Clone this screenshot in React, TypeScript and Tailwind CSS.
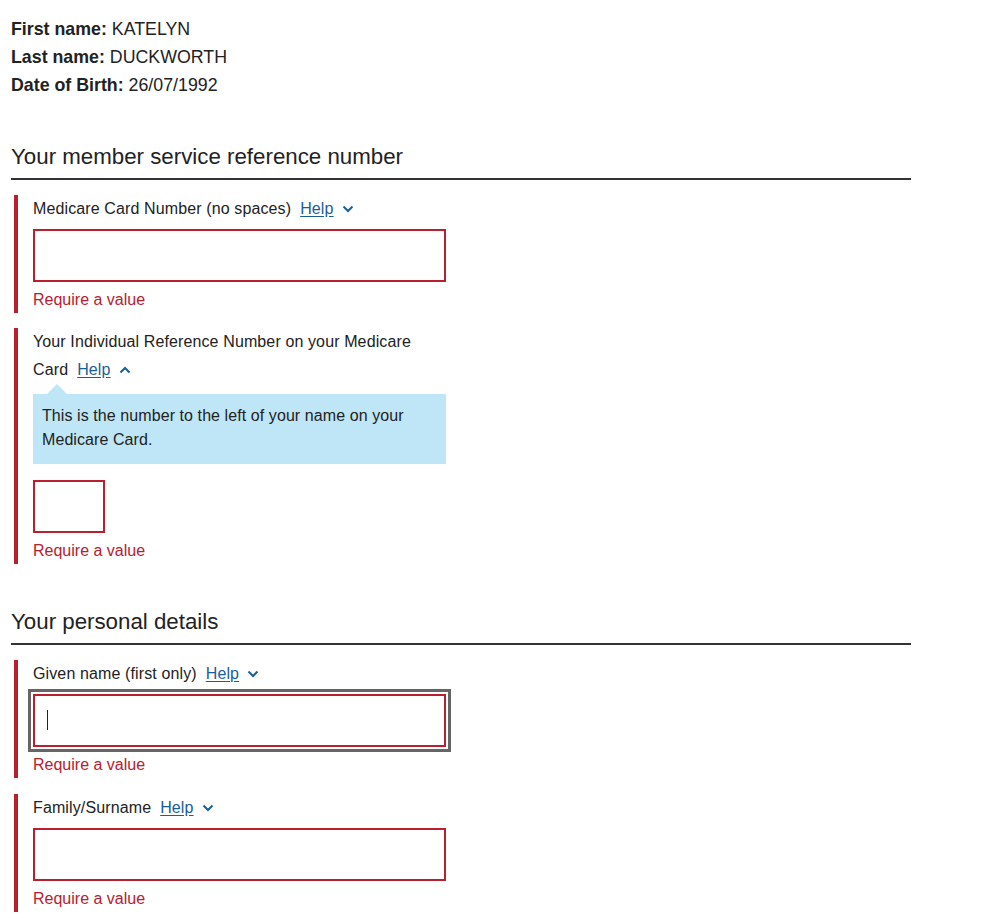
import React from "react";

const Chevron = ({ up = false }: { up?: boolean }) => (
  <svg width="12" height="8" viewBox="0 0 12 8" className="ml-[8px] inline-block">
    <path
      d={up ? "M1.5 6.5 L6 2 L10.5 6.5" : "M1.5 1.5 L6 6 L10.5 1.5"}
      fill="none"
      stroke="#1a5e96"
      strokeWidth="2"
    />
  </svg>
);

const Help = ({ up = false }: { up?: boolean }) => (
  <span className="ml-[9px] inline-flex items-center">
    <a href="#" className="text-[#1a5e96] underline underline-offset-2">
      Help
    </a>
    <Chevron up={up} />
  </span>
);

const Error = () => (
  <p className="mt-[6px] pb-[1px] text-[16px] leading-[24px] text-[#b8202f]">Require a value</p>
);

const Field = ({ children }: { children: React.ReactNode }) => (
  <div className="ml-[3px] border-l-4 border-[#b8202f] pl-[15px]">{children}</div>
);

const SectionTitle = ({ title }: { title: string }) => (
  <h2 className="w-[900px] border-b-2 border-[#333] pb-[6px] text-[22.3px] leading-[30px] text-[#222]">
    {title}
  </h2>
);

export default function App() {
  return (
    <div
      className="min-h-[920px] bg-white pl-[11px] pt-[15px] text-[#222]"
      style={{ fontFamily: '"Liberation Sans", Arial, sans-serif' }}
    >
      <div className="text-[17.8px] leading-[28px]">
        <p>
          <b>First name:</b> KATELYN
        </p>
        <p>
          <b>Last name:</b> DUCKWORTH
        </p>
        <p>
          <b>Date of Birth:</b> 26/07/1992
        </p>
      </div>

      <div className="mt-[43px]">
        <SectionTitle title="Your member service reference number" />
      </div>

      <div className="mt-[15px] flex flex-col gap-[15px] text-[16px]">
        <Field>
          <label className="block leading-[28px] tracking-[0.12px]">
            Medicare Card Number (no spaces)
            <Help />
          </label>
          <input className="mt-[6px] block h-[53px] w-[413px] border-2 border-[#b8202f] bg-white outline-none" />
          <Error />
        </Field>

        <Field>
          <label className="block w-[413px] leading-[28px] tracking-[0.12px]">
            Your Individual Reference Number on your Medicare Card
            <Help up />
          </label>
          <div className="relative mt-[10px] w-[413px] bg-[#bee6f6] pb-[12px] pl-[9px] pr-[10px] pt-[10px] leading-[24px] tracking-[0.08px] text-[#222]">
            <span className="absolute -top-[10px] left-[14px] h-0 w-0 border-x-[10px] border-b-[10px] border-x-transparent border-b-[#bee6f6]" />
            This is the number to the left of your name on your Medicare Card.
          </div>
          <input className="mt-[16px] block h-[53px] w-[72px] border-2 border-[#b8202f] bg-white outline-none" />
          <Error />
        </Field>
      </div>

      <div className="mt-[43px]">
        <SectionTitle title="Your personal details" />
      </div>

      <div className="mt-[15px] flex flex-col gap-[16px] text-[16px]">
        <Field>
          <label className="block leading-[28px] tracking-[0.12px]">
            Given name (first only)
            <Help />
          </label>
          <div className="relative mt-[6px] w-[413px]">
            <input className="block h-[53px] w-[413px] border-2 border-[#b8202f] bg-white outline-[3px] outline-offset-[2px] outline-[#666] outline-solid" />
            <span className="absolute left-[14px] top-[16px] h-[20px] w-px bg-[#222]" />
          </div>
          <Error />
        </Field>

        <Field>
          <label className="block leading-[28px] tracking-[0.12px]">
            Family/Surname
            <Help />
          </label>
          <input className="mt-[6px] block h-[53px] w-[413px] border-2 border-[#b8202f] bg-white outline-none" />
          <Error />
        </Field>
      </div>
    </div>
  );
}
